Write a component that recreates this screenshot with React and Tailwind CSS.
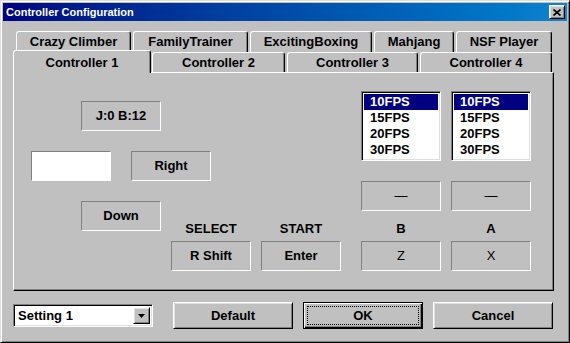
import React from 'react';

// Win98-style bevels
const raised =
  'bg-[#c0c0c0] border border-t-white border-l-white border-r-black border-b-black shadow-[inset_1px_1px_0_#dfdfdf,inset_-1px_-1px_0_#808080]';
const etched = 'border border-t-[#808080] border-l-[#808080] border-r-white border-b-white';
const sunken =
  'bg-white border border-t-[#808080] border-l-[#808080] border-r-white border-b-white shadow-[inset_1px_1px_0_#000,inset_-1px_-1px_0_#dfdfdf]';
const tabEdge =
  'border-t border-l border-r border-t-white border-l-white border-r-black shadow-[inset_-1px_0_0_#808080] rounded-t-[3px]';

const topTabs = [
  { label: 'Crazy Climber', w: 'w-[115px]' },
  { label: 'FamilyTrainer', w: 'w-[115px]' },
  { label: 'ExcitingBoxing', w: 'w-[122px]' },
  { label: 'Mahjang', w: 'w-[80px]' },
  { label: 'NSF Player', w: 'w-[96px]' },
];

const fps = ['10FPS', '15FPS', '20FPS', '30FPS'];

const KeyBox = ({ children, className = '' }) => (
  <div className={`flex h-[30px] w-[80px] items-center justify-center ${etched} ${className}`}>
    {children}
  </div>
);

const FpsList = () => (
  <div className={`h-[70px] w-[80px] p-[2px] ${sunken}`}>
    {fps.map((f, i) => (
      <div
        key={f}
        className={`h-[16px] pl-[6px] leading-[16px] ${i === 0 ? 'bg-[#000080] text-white' : 'text-black'}`}
      >
        {f}
      </div>
    ))}
  </div>
);

const ButtonColumn = ({ label, keyName }) => (
  <div className="flex w-[80px] flex-col">
    <FpsList />
    <KeyBox className="mt-[20px] font-normal">—</KeyBox>
    <div className="mt-[10px] h-[16px] text-center leading-[16px]">{label}</div>
    <KeyBox className="mt-[4px] font-normal">{keyName}</KeyBox>
  </div>
);

const LabeledKey = ({ label, keyName, className = '' }) => (
  <div className={`flex w-[80px] flex-col ${className}`}>
    <div className="mt-[20px] h-[16px] text-center leading-[16px]">{label}</div>
    <KeyBox className="mt-[4px]">{keyName}</KeyBox>
  </div>
);

export default function App() {
  return (
    <div className="h-[343px] w-[570px] overflow-hidden border border-t-[#dfdfdf] border-l-[#dfdfdf] border-r-black border-b-black bg-[#c0c0c0] p-[2px] font-['Liberation_Sans',Arial,sans-serif] text-[13px] font-bold text-black shadow-[inset_1px_1px_0_#fff,inset_-1px_-1px_0_#808080] select-none">
      {/* title bar */}
      <div className="flex h-[18px] items-center justify-between bg-linear-to-r from-[#000080] to-[#1084d0] pl-[3px] pr-[2px] text-[11px] text-white">
        <span>Controller Configuration</span>
        <div className={`flex h-[14px] w-[16px] items-center justify-center ${raised}`}>
          <svg width="8" height="7" viewBox="0 0 8 7">
            <path d="M0.5 0.5L7.5 6.5M7.5 0.5L0.5 6.5" stroke="#000" strokeWidth="1.6" />
          </svg>
        </div>
      </div>

      {/* back tab row */}
      <div className="mt-[10px] flex h-[21px] gap-[2px] pl-[13px]">
        {topTabs.map((t) => (
          <div key={t.label} className={`flex h-[21px] items-center justify-center ${t.w} ${tabEdge}`}>
            {t.label}
          </div>
        ))}
      </div>

      {/* front tab row */}
      <div className="flex h-[20px] items-start pl-[10px]">
        <div
          className={`relative z-10 -mt-[2px] flex h-[23px] w-[138px] items-start justify-center bg-[#c0c0c0] pt-[2px] ${tabEdge}`}
        >
          Controller 1
        </div>
        <div className={`ml-[1px] flex h-[20px] w-[133px] items-center justify-center ${tabEdge}`}>Controller 2</div>
        <div className={`ml-[2px] flex h-[20px] w-[131px] items-center justify-center ${tabEdge}`}>Controller 3</div>
        <div className={`ml-[2px] flex h-[20px] w-[132px] items-center justify-center ${tabEdge}`}>Controller 4</div>
      </div>

      {/* tab page */}
      <div className="ml-[10px] flex h-[219px] w-[541px] border border-t-white border-l-white border-r-black border-b-black shadow-[inset_-1px_-1px_0_#808080]">
        <div className="flex w-[347px] flex-col">
          <KeyBox className="ml-[67px] mt-[28px]">J:0 B:12</KeyBox>
          <div className="mt-[20px] flex">
            <div className={`ml-[17px] h-[30px] w-[80px] bg-white ${etched}`} />
            <KeyBox className="ml-[20px]">Right</KeyBox>
          </div>
          <div className="mt-[20px] flex items-start">
            <KeyBox className="ml-[67px]">Down</KeyBox>
            <LabeledKey className="ml-[10px]" label="SELECT" keyName="R Shift" />
            <LabeledKey className="ml-[10px]" label="START" keyName="Enter" />
          </div>
        </div>
        <div className="mt-[18px] flex gap-[10px]">
          <ButtonColumn label="B" keyName="Z" />
          <ButtonColumn label="A" keyName="X" />
        </div>
      </div>

      {/* bottom buttons */}
      <div className="ml-[10px] mt-[11px] flex items-start">
        <div className={`mt-[2px] flex h-[23px] w-[140px] items-center p-[2px] ${sunken}`}>
          <span className="flex-1 pl-[2px]">Setting 1</span>
          <div className={`flex h-full w-[17px] items-center justify-center ${raised}`}>
            <svg width="7" height="4" viewBox="0 0 7 4">
              <path d="M0 0h7L3.5 4z" fill="#000" />
            </svg>
          </div>
        </div>
        <button className={`ml-[20px] flex h-[27px] w-[120px] items-center justify-center ${raised}`}>Default</button>
        <button className="ml-[10px] flex h-[27px] w-[120px] items-center justify-center border border-black bg-[#c0c0c0] p-[3px] shadow-[inset_1px_1px_0_#fff,inset_-1px_-1px_0_#000,inset_-2px_-2px_0_#808080]">
          <span className="flex h-full w-full items-center justify-center border border-dotted border-black">OK</span>
        </button>
        <button className={`ml-[10px] flex h-[27px] w-[120px] items-center justify-center ${raised}`}>Cancel</button>
      </div>
    </div>
  );
}
